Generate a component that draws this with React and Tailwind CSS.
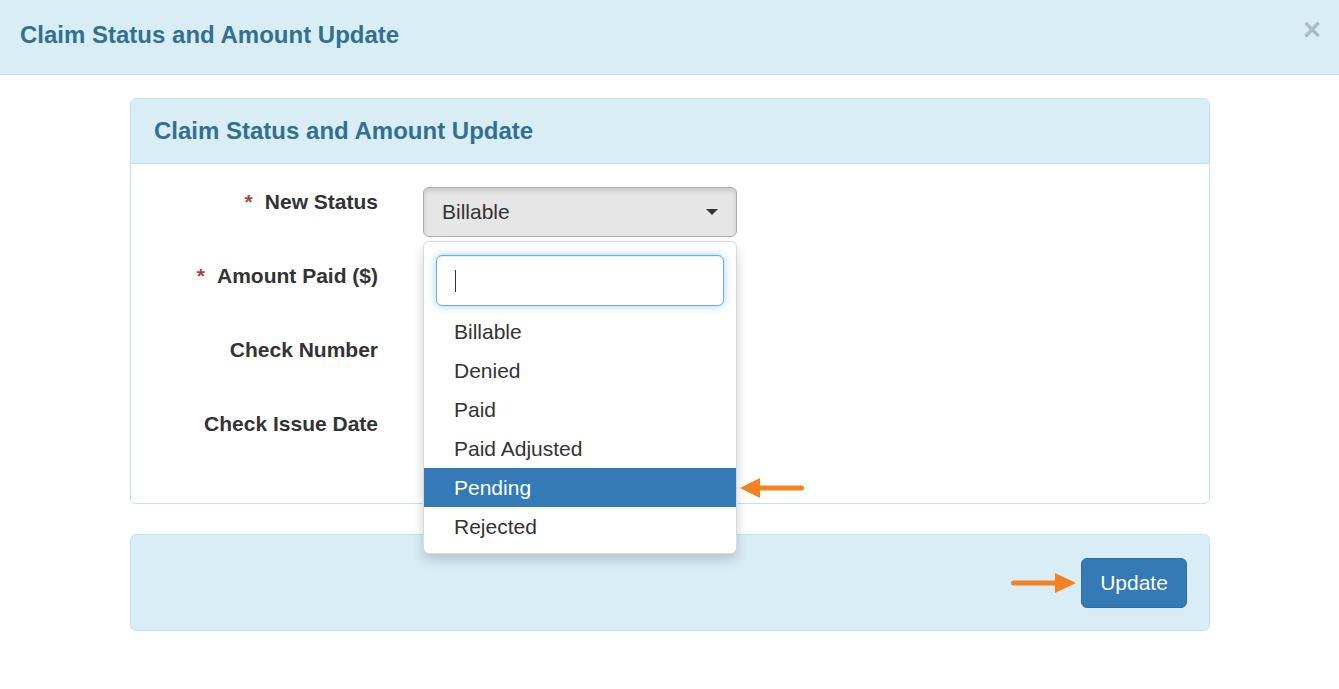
import React from "react";

function ArrowLeft() {
  return (
    <svg width="64" height="20" viewBox="0 0 64 20" className="block">
      <line x1="19" y1="10" x2="61.5" y2="10" stroke="#f58220" strokeWidth="5" strokeLinecap="round" />
      <polygon points="0,10 20,0 20,20" fill="#f58220" />
    </svg>
  );
}

function ArrowRight() {
  return (
    <svg width="65" height="20" viewBox="0 0 65 20" className="block">
      <line x1="2.5" y1="10" x2="46" y2="10" stroke="#f58220" strokeWidth="5" strokeLinecap="round" />
      <polygon points="65,10 44,0 44,20" fill="#f58220" />
    </svg>
  );
}

function Label({ required, children }) {
  return (
    <div className="w-[224px] shrink-0 text-right text-[21px] font-bold leading-[30px] text-[#333]">
      {required && <span className="mr-[12px] text-[#a94442]">*</span>}
      {children}
    </div>
  );
}

function TextInput() {
  return (
    <div className="h-[50px] w-[314px] rounded-[6px] border border-[#ccc] bg-white shadow-[inset_0_1px_1px_rgba(0,0,0,0.075)]" />
  );
}

const options = ["Billable", "Denied", "Paid", "Paid Adjusted", "Pending", "Rejected"];

export default function App() {
  return (
    <div className="min-h-screen bg-white font-['Liberation_Sans',Arial,sans-serif]">
      <div className="flex h-[75px] items-start justify-between border-b border-[#bce8f1] bg-[#d9edf7] pl-[20px] pr-[18px]">
        <h4 className="pt-[22px] text-[24px] font-bold leading-[26px] text-[#31708f]">
          Claim Status and Amount Update
        </h4>
        <button className="mt-[14px] text-[31px] font-bold leading-[31px] text-black opacity-20">×</button>
      </div>

      <div className="ml-[130px] w-[1080px] pt-[23px]">
        <div className="rounded-[6px] border border-[#bce8f1]">
          <div className="flex h-[65px] items-center rounded-t-[5px] border-b border-[#bce8f1] bg-[#d9edf7] px-[23px]">
            <h3 className="text-[24px] font-bold leading-[26px] text-[#31708f]">
              Claim Status and Amount Update
            </h3>
          </div>
          <div className="flex flex-col gap-[24px] px-[23px] pb-[44px] pt-[23px]">
            <div className="flex">
              <Label required>New Status</Label>
              <div className="relative ml-[45px]">
                <div className="flex h-[50px] w-[314px] items-center justify-between rounded-[6px] border border-[#adadad] bg-[#e6e6e6] pl-[18px] pr-[18px] text-[21px] text-[#333] shadow-[inset_0_3px_5px_rgba(0,0,0,0.125)]">
                  <span>Billable</span>
                  <span className="h-0 w-0 border-l-[6px] border-r-[6px] border-t-[6px] border-l-transparent border-r-transparent border-t-[#333]" />
                </div>
                <div className="absolute left-[0px] top-[54px] z-10 h-[313px] w-[314px] rounded-[6px] border border-[rgba(0,0,0,0.15)] bg-white shadow-[0_6px_12px_rgba(0,0,0,0.175)]">
                  <div className="ml-[12px] mt-[13px] flex h-[51px] w-[288px] items-center rounded-[6px] border border-[#66afe9] bg-white pl-[18px] shadow-[inset_0_1px_1px_rgba(0,0,0,0.075),0_0_8px_rgba(102,175,233,0.6)]">
                    <span className="h-[22px] w-px bg-[#333]" />
                  </div>
                  <ul className="mt-[6px]">
                    {options.map((o) => (
                      <li
                        key={o}
                        className={
                          o === "Pending"
                            ? "flex h-[39px] items-center bg-[#337ab7] pl-[30px] text-[21px] text-white"
                            : "flex h-[39px] items-center pl-[30px] text-[21px] text-[#333]"
                        }
                      >
                        {o}
                      </li>
                    ))}
                  </ul>
                  <div className="absolute left-[316px] top-[236px]">
                    <ArrowLeft />
                  </div>
                </div>
              </div>
            </div>
            <div className="flex">
              <Label required>Amount Paid ($)</Label>
              <div className="ml-[45px]">
                <TextInput />
              </div>
            </div>
            <div className="flex">
              <Label>Check Number</Label>
              <div className="ml-[45px]">
                <TextInput />
              </div>
            </div>
            <div className="flex">
              <Label>Check Issue Date</Label>
              <div className="ml-[45px]">
                <TextInput />
              </div>
            </div>
          </div>
        </div>

        <div className="mt-[30px] flex h-[97px] items-center justify-end gap-[5px] rounded-[6px] border border-[#bce8f1] bg-[#d9edf7] pr-[22px]">
          <ArrowRight />
          <button className="h-[50px] w-[106px] rounded-[6px] border border-[#2e6da4] bg-[#337ab7] text-[21px] text-white">
            Update
          </button>
        </div>
      </div>
    </div>
  );
}
